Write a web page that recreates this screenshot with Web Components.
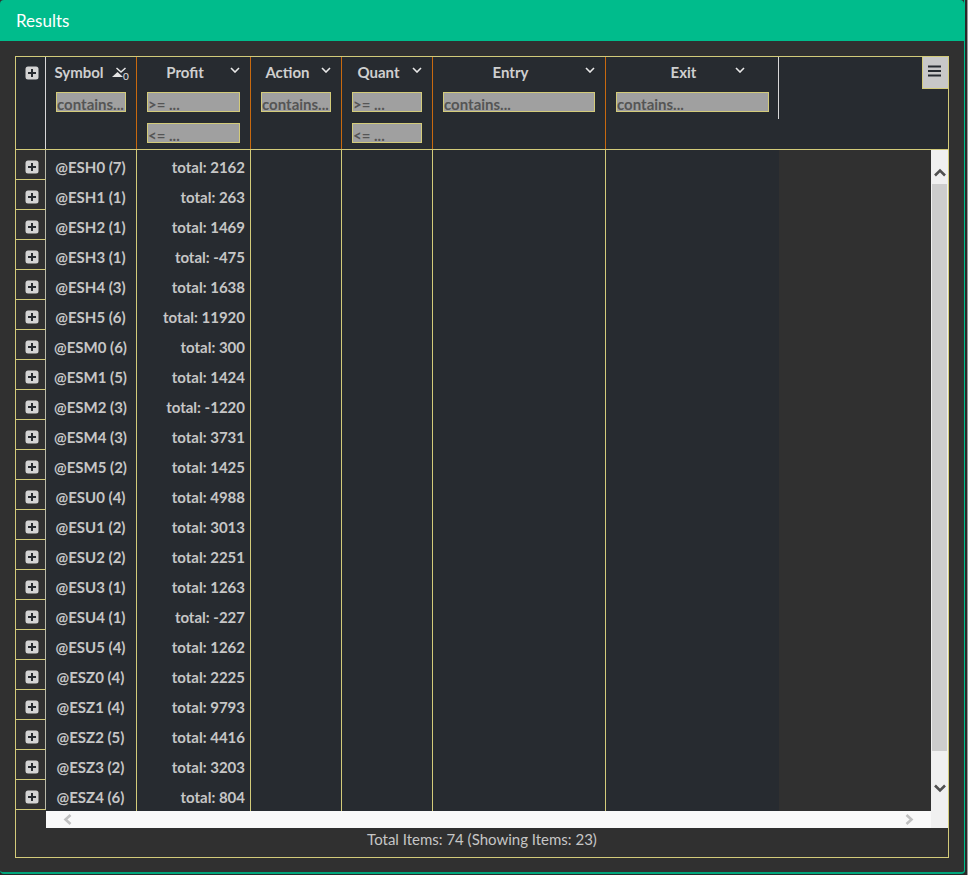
<!DOCTYPE html>
<html>
<head>
<meta charset="utf-8">
<title>Results</title>
<style>
  html, body { margin: 0; height: 100%; background: #2a2a2a; }
  body { font-family: Lato, "Open Sans", sans-serif; overflow: hidden; border-right: 1px solid #9a9a9a; box-sizing: border-box; }
</style>
</head>
<body>
<results-modal heading="Results">
  <results-grid></results-grid>
</results-modal>

<script>
const PLUS_ICON = `<svg width="14" height="14" viewBox="0 0 14 14"><rect x="0.5" y="0.5" width="13" height="13" rx="2.5" fill="#d4d4d4"/><path d="M7 3v8M3 7h8" stroke="#272b30" stroke-width="2"/></svg>`;
const CHEVRON = `<svg width="10" height="6" viewBox="0 0 10 6"><path d="M1 1l4 4 4-4" fill="none" stroke="#e8e8e8" stroke-width="1.6"/></svg>`;

class ResultsModal extends HTMLElement {
  constructor() {
    super();
    this.shadowDom = this.attachShadow({ mode: 'open' });
    this.shadowDom.innerHTML = `
    <style>
    :host {
      display: flex;
      flex-direction: column;
      width: 965px;
      height: 874px;
      box-sizing: border-box;
      background: #303030;
      border-right: 1px solid #00bc8c;
      border-bottom: 2px solid #00a57b;
      border-radius: 0 0 4px 4px;
      color: #fff;
    }
    .header {
      height: 41px;
      background: #00bc8c;
      padding-left: 16px;
      font-size: 17px;
      line-height: 41px;
      border-radius: 4px 4px 0 0;
      flex: none;
    }
    .body {
      padding: 15px 15px 14px 15px;
      flex: 1;
      display: flex;
      min-height: 0;
    }
    </style>
    <div class="header">${this.getAttribute('heading')}</div>
    <div class="body"><slot></slot></div>
    `;
  }
}

class PlusButton extends HTMLElement {
  constructor() {
    super();
    this.attachShadow({ mode: 'open' }).innerHTML = `
    <style>
    :host { display: flex; width: 14px; height: 14px; }
    </style>
    ${PLUS_ICON}
    `;
  }
}

class FilterBox extends HTMLElement {
  constructor() {
    super();
    this.attachShadow({ mode: 'open' }).innerHTML = `
    <style>
    :host {
      display: block;
      height: 20px;
      box-sizing: border-box;
      background: #a0a0a0;
      border: 1px solid #d3cb7a;
      color: #555;
      font-weight: 700;
      font-size: 15px;
      line-height: 20px;
      padding-top: 1px;
      white-space: nowrap;
      overflow: hidden;
    }
    </style>
    <slot></slot>
    `;
  }
}

class HeaderCell extends HTMLElement {
  constructor() {
    super();
    const off = Number(this.getAttribute('chevron-right') || 10);
    const isSorted = this.hasAttribute('sorted');
    const icon = isSorted
      ? `<svg class="sort" width="17" height="18" viewBox="0 0 17 18">
           <path d="M0 14l5.5-5 5.5 5z" fill="#e4e4e4"/>
           <path d="M4.5 5l4.5 4 4.5-4" fill="none" stroke="#e8e8e8" stroke-width="1.5"/>
           <text x="11" y="17" font-size="10" font-family="Lato, sans-serif" fill="#e4e4e4">0</text>
         </svg>`
      : `<span class="chev">${CHEVRON}</span>`;
    this.attachShadow({ mode: 'open' }).innerHTML = `
    <style>
    :host {
      display: flex;
      flex-direction: column;
      box-sizing: border-box;
      border-right: 1px solid #c8690f;
      min-width: 0;
    }
    :host([last]) {
      border-right-color: #d8d8d8;
      height: 62px;
    }
    :host([last]) .filters { padding-right: 9px; }
    .top {
      display: flex;
      height: 35px;
      align-items: flex-start;
    }
    .title {
      flex: 1;
      min-width: 0;
      text-align: center;
      font-weight: 700;
      font-size: 15px;
      line-height: 31px;
      color: #cfcfcf;
    }
    .chev {
      flex: none;
      display: flex;
      margin: 10px ${off}px 0 ${7 - off}px;
    }
    .sort { flex: none; margin: 6px 7px 0 0; }
    .filters {
      display: flex;
      flex-direction: column;
      gap: 11px;
      padding: 0 10px;
    }
    </style>
    <div class="top">
      <div class="title">${this.getAttribute('title')}</div>
      ${icon}
    </div>
    <div class="filters"><slot></slot></div>
    `;
  }
}

class RowToggle extends HTMLElement {
  constructor() {
    super();
    this.attachShadow({ mode: 'open' }).innerHTML = `
    <style>
    :host {
      display: flex;
      height: 30px;
      box-sizing: border-box;
      border-bottom: 1px solid #d3cb7a;
      border-right: 1px solid #b9b9a8;
      align-items: flex-start;
      justify-content: center;
      padding-top: 10px;
      padding-left: 2px;
    }
    </style>
    <plus-button></plus-button>
    `;
  }
}

class DataColumn extends HTMLElement {
  constructor() {
    super();
    this.attachShadow({ mode: 'open' }).innerHTML = `
    <style>
    :host {
      display: block;
      box-sizing: border-box;
      border-right: 1px solid #d3cb7a;
      background: #272b30;
    }
    :host([last]) { border-right: 0; }
    ::slotted(div) {
      height: 30px;
      line-height: 33px;
      font-weight: 700;
      font-size: 15px;
      color: #c6c6c6;
      white-space: nowrap;
    }
    </style>
    <slot></slot>
    `;
  }
}

class VScroll extends HTMLElement {
  constructor() {
    super();
    this.attachShadow({ mode: 'open' }).innerHTML = `
    <style>
    :host {
      display: flex;
      flex-direction: column;
      background: #f0f0f0;
      padding: 0 1px;
      box-sizing: border-box;
      width: 17px;
    }
    .btn { height: 34px; flex: none; display: flex; justify-content: center; align-items: center; padding-top: 11px; box-sizing: border-box; }
    .thumb { flex: 1; background: #cdcdcd; }
    .bot { height: 77px; flex: none; display: flex; justify-content: center; padding-top: 33px; box-sizing: border-box; }
    </style>
    <div class="btn"><svg width="12" height="9" viewBox="0 0 12 9"><path d="M1 7.5l5-5 5 5" fill="none" stroke="#505050" stroke-width="2.6"/></svg></div>
    <div class="thumb"></div>
    <div class="bot"><svg width="12" height="9" viewBox="0 0 12 9"><path d="M1 1.5l5 5 5-5" fill="none" stroke="#505050" stroke-width="2.6"/></svg></div>
    `;
  }
}

class HScroll extends HTMLElement {
  constructor() {
    super();
    this.attachShadow({ mode: 'open' }).innerHTML = `
    <style>
    :host {
      display: flex;
      justify-content: space-between;
      align-items: center;
      background: #f9f9f9;
      height: 17px;
      padding: 0 17px;
    }
    </style>
    <svg width="9" height="11" viewBox="0 0 9 11"><path d="M7.5 1l-5 4.5 5 4.5" fill="none" stroke="#c0c0c0" stroke-width="2.6"/></svg>
    <svg width="9" height="11" viewBox="0 0 9 11"><path d="M1.5 1l5 4.5-5 4.5" fill="none" stroke="#c0c0c0" stroke-width="2.6"/></svg>
    `;
  }
}

class ResultsGrid extends HTMLElement {
  constructor() {
    super();
    const rows = [
      ['@ESH0 (7)', 2162], ['@ESH1 (1)', 263], ['@ESH2 (1)', 1469], ['@ESH3 (1)', -475],
      ['@ESH4 (3)', 1638], ['@ESH5 (6)', 11920], ['@ESM0 (6)', 300], ['@ESM1 (5)', 1424],
      ['@ESM2 (3)', -1220], ['@ESM4 (3)', 3731], ['@ESM5 (2)', 1425], ['@ESU0 (4)', 4988],
      ['@ESU1 (2)', 3013], ['@ESU2 (2)', 2251], ['@ESU3 (1)', 1263], ['@ESU4 (1)', -227],
      ['@ESU5 (4)', 1262], ['@ESZ0 (4)', 2225], ['@ESZ1 (4)', 9793], ['@ESZ2 (5)', 4416],
      ['@ESZ3 (2)', 3203], ['@ESZ4 (6)', 804]
    ];
    this.shadowDom = this.attachShadow({ mode: 'open' });
    this.shadowDom.innerHTML = `
    <style>
    :host {
      display: flex;
      flex-direction: column;
      flex: 1;
      box-sizing: border-box;
      border: 1px solid #d3cb7a;
      min-width: 0;
    }
    .head {
      display: grid;
      grid-template-columns: 30px 91px 114px 91px 91px 173px 173px 1fr;
      height: 93px;
      box-sizing: border-box;
      background: #272b30;
      border-bottom: 1px solid #d3cb7a;
      flex: none;
    }
    .head-plus {
      border-right: 1px solid #d8d8d8;
      display: flex;
      justify-content: center;
      align-items: flex-start;
      padding: 9px 0 0 2px;
    }
    .menu-wrap { display: flex; justify-content: flex-end; align-items: flex-start; }
    .menu {
      width: 26px;
      height: 32px;
      box-sizing: border-box;
      background: #c8c8c8;
      border: 1px solid #d3cb7a;
      border-top: 0;
      border-right: 0;
      display: flex;
      align-items: center;
      justify-content: center;
      padding: 0 3px 3px 0;
    }
    .middle {
      display: grid;
      grid-template-columns: 1fr 17px;
      flex: none;
      height: 678px;
    }
    .rows {
      display: grid;
      grid-template-columns: 30px 91px 114px 91px 91px 173px 173px 1fr;
      grid-template-rows: 661px 17px;
      min-height: 0;
    }
    .toggles { padding-top: 1px; margin-top: -1px; }
    .data { padding-top: 1px; }
    .sym { text-align: center; padding-right: 1px; }
    .tot { text-align: right; padding-right: 5px; }
    h-scroll { grid-column: 2 / -1; }
    .foot {
      flex: 1;
      text-align: center;
      font-size: 15px;
      line-height: 23px;
      color: #c6c6c6;
    }
    </style>
    <div class="head">
      <div class="head-plus"><plus-button></plus-button></div>
      <header-cell title="Symbol" sorted><filter-box>contains...</filter-box></header-cell>
      <header-cell title="Profit"><filter-box>&gt;= ...</filter-box><filter-box>&lt;= ...</filter-box></header-cell>
      <header-cell title="Action"><filter-box>contains...</filter-box></header-cell>
      <header-cell title="Quant"><filter-box>&gt;= ...</filter-box><filter-box>&lt;= ...</filter-box></header-cell>
      <header-cell title="Entry"><filter-box>contains...</filter-box></header-cell>
      <header-cell title="Exit" last chevron-right="33"><filter-box>contains...</filter-box></header-cell>
      <div class="menu-wrap"><div class="menu">
        <svg width="13" height="12" viewBox="0 0 13 12"><path d="M0 1.5h13M0 6h13M0 10.5h13" stroke="#272b30" stroke-width="2"/></svg>
      </div></div>
    </div>
    <div class="middle">
      <div class="rows">
        <div class="toggles">${rows.map(() => '<row-toggle></row-toggle>').join('')}</div>
        <data-column class="data">${rows.map(r => `<div class="sym">${r[0]}</div>`).join('')}</data-column>
        <data-column class="data">${rows.map(r => `<div class="tot">total: ${r[1]}</div>`).join('')}</data-column>
        <data-column></data-column>
        <data-column></data-column>
        <data-column></data-column>
        <data-column last></data-column>
        <div></div>
        <h-scroll></h-scroll>
      </div>
      <v-scroll></v-scroll>
    </div>
    <div class="foot">Total Items: 74 (Showing Items: 23)</div>
    `;
  }
}

customElements.define('plus-button', PlusButton);
customElements.define('filter-box', FilterBox);
customElements.define('header-cell', HeaderCell);
customElements.define('row-toggle', RowToggle);
customElements.define('data-column', DataColumn);
customElements.define('v-scroll', VScroll);
customElements.define('h-scroll', HScroll);
customElements.define('results-grid', ResultsGrid);
customElements.define('results-modal', ResultsModal);
</script>
</body>
</html>
